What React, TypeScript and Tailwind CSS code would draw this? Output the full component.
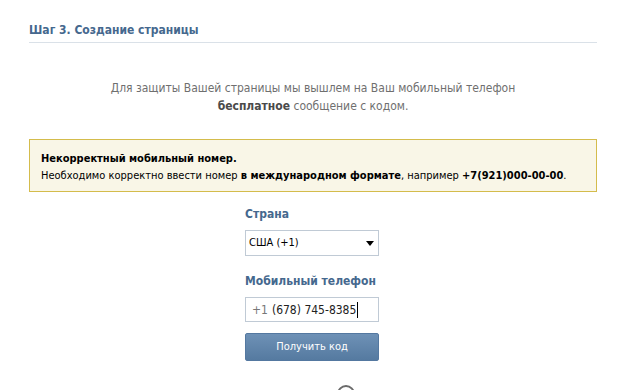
export default function App() {
  return (
    <div className="w-[626px] h-[390px] overflow-hidden bg-white font-['DejaVu_Sans_Condensed','DejaVu_Sans',sans-serif] text-[11px]">
      <div className="pl-[29px] pr-[29px] pt-[22px]">
        <div className="border-b border-[#dae1e8] pb-[4px]">
          <h1 className="text-[12px] font-bold text-[#45688e] leading-[16px]">
            Шаг 3. Создание страницы
          </h1>
        </div>

        <p className="mt-[36px] text-center text-[12px] leading-[18px] text-[#6f6f6f]">
          Для защиты Вашей страницы мы вышлем на Ваш мобильный телефон
          <br />
          <b className="text-[#4a4a4a]">бесплатное</b> сообщение с кодом.
        </p>

        <div className="mt-[24px] bg-[#f9f6e7] border border-[#d4bc4c] px-[11px] pt-[10px] pb-[7px] leading-[17px] text-black whitespace-nowrap">
          <div className="font-bold">Некорректный мобильный номер.</div>
          <div>
            Необходимо корректно ввести номер{" "}
            <b>в международном формате</b>, например{" "}
            <b>+7(921)000-00-00</b>.
          </div>
        </div>

        <div className="ml-[216px] w-[134px] mt-[14px]">
          <div className="text-[12px] font-bold text-[#45688e] leading-[16px] whitespace-nowrap">
            Страна
          </div>
          <div className="mt-[8px] h-[26px] border border-[#c0cad5] flex items-center justify-between pl-[3px] pr-[4px] text-black">
            <span>США (+1)</span>
            <svg width="8" height="5" viewBox="0 0 8 5">
              <path d="M0 0h8L4 5z" fill="#000" />
            </svg>
          </div>

          <div className="mt-[17px] text-[12px] font-bold text-[#45688e] leading-[16px] whitespace-nowrap">
            Мобильный телефон
          </div>
          <div className="mt-[8px] h-[25px] border border-[#c0cad5] flex items-center pl-[6px] text-[12px] text-[#222] whitespace-nowrap">
            <span className="text-[#777]">+1</span>
            <span className="ml-[4px]">(678) 745-8385</span>
            <span className="w-px h-[16px] bg-black ml-px" />
          </div>

          <div className="mt-[11px] h-[28px] rounded-[2px] bg-gradient-to-b from-[#6e91b6] to-[#557aa0] border border-[#5478a0] flex items-center justify-center text-white text-[11px]">
            Получить код
          </div>

          <div className="mt-[24px] ml-[92px] w-[18px] h-[18px] rounded-full border-2 border-[#6b6b6b]" />
        </div>
      </div>
    </div>
  );
}
